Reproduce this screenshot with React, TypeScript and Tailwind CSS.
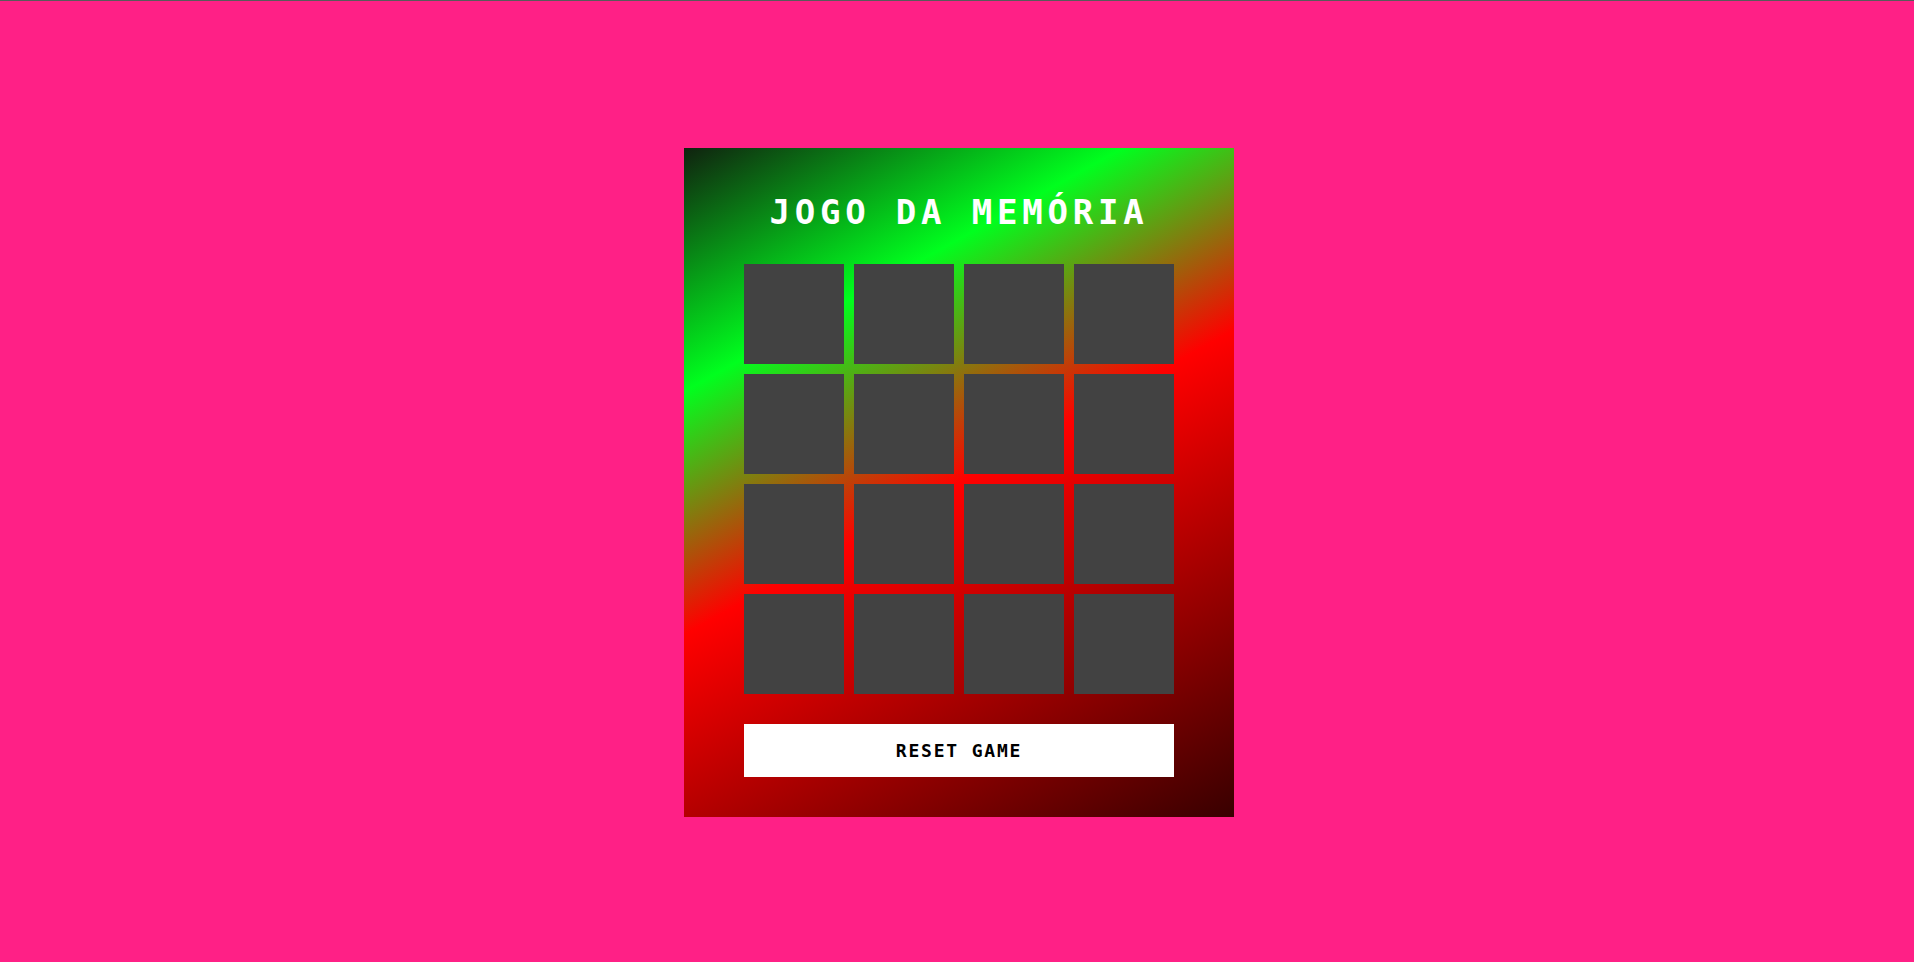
import React, { useState } from "react"

const cards = Array.from({ length: 16 }, (_, i) => i)

function Board() {
    const [flipped, setFlipped] = useState<number[]>([])

    return (
        <div className="w-[550px] pt-[44px] px-[60px] pb-[40px] bg-[linear-gradient(151deg,#10220f_0%,#00ff1e_25%,#ff0000_50%,#380000_100%)] font-['DejaVu_Sans_Mono',monospace]">
            <h2 className="h-[40px] leading-[40px] text-[34px] font-bold tracking-[4.8px] text-white text-center mb-[32px]">
                JOGO DA MEMÓRIA
            </h2>
            <div className="grid grid-cols-[repeat(4,100px)] gap-[10px]">
                {cards.map((c) => (
                    <div
                        key={c}
                        className="w-[100px] h-[100px] bg-[#424242] cursor-pointer"
                        onClick={() => setFlipped([...flipped, c])}
                    />
                ))}
            </div>
            <button
                className="mt-[30px] w-full h-[53px] bg-white text-black text-[18px] font-bold tracking-[0.1em] cursor-pointer"
                onClick={() => setFlipped([])}
            >
                RESET GAME
            </button>
        </div>
    )
}

export default function App() {
    return (
        <div className="min-h-screen bg-[#ff2086]">
            <div className="h-px bg-[#5a5a5a]" />
            <div className="flex justify-center items-center h-[961px] pl-1 pt-0.5">
                <Board />
            </div>
        </div>
    )
}
